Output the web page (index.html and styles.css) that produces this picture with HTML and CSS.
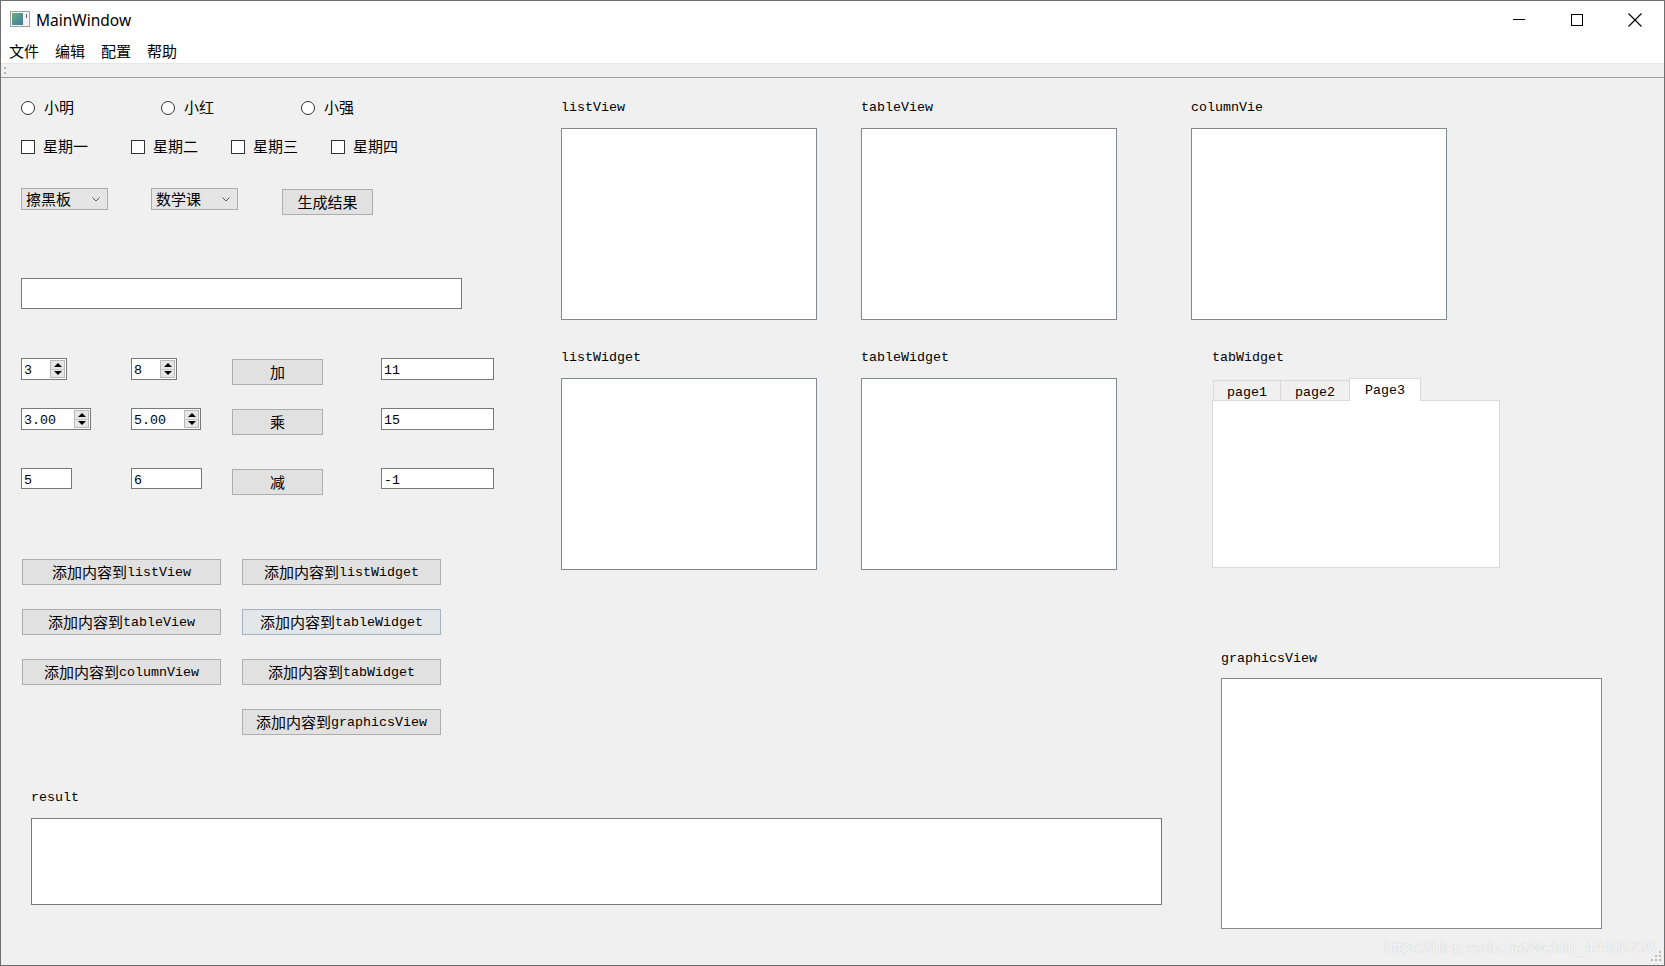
FILE: index.html
```html
<!DOCTYPE html>
<html>
<head>
<meta charset="utf-8">
<title>MainWindow</title>
<link rel="stylesheet" href="styles.css">
</head>
<body>
<div class="window">
  <div class="titlebar">
    <svg class="appicon" width="20" height="16" viewBox="0 0 20 16">
      <defs>
        <linearGradient id="ig" x1="0" y1="0" x2="1" y2="1">
          <stop offset="0" stop-color="#6bb07a"/>
          <stop offset="1" stop-color="#3c78a8"/>
        </linearGradient>
      </defs>
      <rect x="0.5" y="0.5" width="19" height="15" fill="#f4f4f4" stroke="#a0a0a0"/>
      <rect x="2" y="2" width="11" height="12" fill="url(#ig)"/>
      <rect x="16" y="3" width="1" height="4" fill="#5a5a5a"/>
    </svg>
    <span class="title">MainWindow</span>
    <div class="controls">
      <div class="ctl"><svg width="12" height="1" viewBox="0 0 12 1"><rect width="12" height="1" fill="#000"/></svg></div>
      <div class="ctl"><svg width="12" height="12" viewBox="0 0 12 12"><rect x="0.5" y="0.5" width="11" height="11" fill="none" stroke="#000"/></svg></div>
      <div class="ctl"><svg width="14" height="14" viewBox="0 0 14 14"><path d="M0.5 0.5 L13.5 13.5 M13.5 0.5 L0.5 13.5" stroke="#000" stroke-width="1.1" fill="none"/></svg></div>
    </div>
  </div>
  <div class="menubar"><span>文件</span><span>编辑</span><span>配置</span><span>帮助</span></div>
  <div class="toolbar">
    <svg class="handle" width="3" height="8" viewBox="0 0 3 8"><rect x="0" y="0" width="2" height="2" fill="#b4b4b4"/><rect x="0" y="5" width="2" height="2" fill="#b4b4b4"/></svg>
  </div>
  <div class="central">
    <div class="main">
      <div class="upper">
        <div class="form">
          <div class="row radios">
            <div class="opt gap9"><span class="radio"></span><span class="cj">小明</span></div>
            <div class="opt gap9"><span class="radio"></span><span class="cj">小红</span></div>
            <div class="opt gap9"><span class="radio"></span><span class="cj">小强</span></div>
          </div>
          <div class="row checks">
            <div class="opt gap8"><span class="check"></span><span class="cj">星期一</span></div>
            <div class="opt gap8"><span class="check"></span><span class="cj">星期二</span></div>
            <div class="opt gap8"><span class="check"></span><span class="cj">星期三</span></div>
            <div class="opt gap8"><span class="check"></span><span class="cj">星期四</span></div>
          </div>
          <div class="row combos">
            <div class="combo"><span>擦黑板</span><svg class="chev" width="8" height="5" viewBox="0 0 8 5"><path d="M0.5 0.5 L4 4 L7.5 0.5" fill="none" stroke="#5a5a5a"/></svg></div>
            <div class="combo"><span>数学课</span><svg class="chev" width="8" height="5" viewBox="0 0 8 5"><path d="M0.5 0.5 L4 4 L7.5 0.5" fill="none" stroke="#5a5a5a"/></svg></div>
            <div class="btn gen">生成结果</div>
          </div>
          <div class="bigedit"></div>
          <div class="row calc calc1">
            <div class="edit spin w46"><span class="lat">3</span><div class="arrows"><span class="up"></span><span class="down"></span></div></div>
            <div class="edit spin w46"><span class="lat">8</span><div class="arrows"><span class="up"></span><span class="down"></span></div></div>
            <div class="btn op">加</div>
            <div class="edit res"><span class="lat">11</span></div>
          </div>
          <div class="row calc calc2">
            <div class="edit spin w70"><span class="lat">3.00</span><div class="arrows"><span class="up"></span><span class="down"></span></div></div>
            <div class="edit spin w70"><span class="lat">5.00</span><div class="arrows"><span class="up"></span><span class="down"></span></div></div>
            <div class="btn op">乘</div>
            <div class="edit res"><span class="lat">15</span></div>
          </div>
          <div class="row calc calc3">
            <div class="edit h21 w51"><span class="lat">5</span></div>
            <div class="edit h21 w71"><span class="lat">6</span></div>
            <div class="btn op">减</div>
            <div class="edit h21 res"><span class="lat">-1</span></div>
          </div>
          <div class="addbtns">
            <div class="btn">添加内容到<span class="lat">listView</span></div>
            <div class="btn">添加内容到<span class="lat">listWidget</span></div>
            <div class="btn">添加内容到<span class="lat">tableView</span></div>
            <div class="btn default">添加内容到<span class="lat">tableWidget</span></div>
            <div class="btn">添加内容到<span class="lat">columnView</span></div>
            <div class="btn">添加内容到<span class="lat">tabWidget</span></div>
            <div class="btn last">添加内容到<span class="lat">graphicsView</span></div>
          </div>
        </div>
        <div class="views">
          <div class="view"><div class="lbl">listView</div><div class="box"></div></div>
          <div class="view"><div class="lbl">tableView</div><div class="box"></div></div>
          <div class="view"><div class="lbl">listWidget</div><div class="box"></div></div>
          <div class="view"><div class="lbl">tableWidget</div><div class="box"></div></div>
        </div>
      </div>
      <div class="result">
        <div class="lbl">result</div>
        <div class="box resbox"></div>
      </div>
    </div>
    <div class="side">
      <div class="view"><div class="lbl">columnVie</div><div class="box"></div></div>
      <div class="tabw">
        <div class="lbl">tabWidget</div>
        <div class="tabs">
          <div class="tab t1">page1</div>
          <div class="tab t2">page2</div>
          <div class="tab t3 sel">Page3</div>
        </div>
        <div class="pane"></div>
      </div>
      <div class="gview">
        <div class="lbl">graphicsView</div>
        <div class="box gbox"></div>
      </div>
    </div>
  </div>
  <div class="watermark">https://blog.csdn.net/weixin_44405720</div>
  <svg class="grip" width="11" height="11" viewBox="0 0 11 11">
    <rect x="8" y="0" width="2" height="2" fill="#bdbdbd"/>
    <rect x="4" y="4" width="2" height="2" fill="#bdbdbd"/>
    <rect x="8" y="4" width="2" height="2" fill="#bdbdbd"/>
    <rect x="0" y="8" width="2" height="2" fill="#bdbdbd"/>
    <rect x="4" y="8" width="2" height="2" fill="#bdbdbd"/>
    <rect x="8" y="8" width="2" height="2" fill="#bdbdbd"/>
  </svg>
</div>
</body>
</html>
```

FILE: styles.css
```css
* { box-sizing: border-box; }
html, body { margin: 0; padding: 0; background: #ffffff; }
body {
  font-family: "Noto Sans CJK SC", "Noto Sans", sans-serif;
  font-size: 15px;
  color: #000;
}
.window {
  width: 1665px;
  height: 966px;
  border: 1px solid #6f6f6f;
  background: #f0f0f0;
  display: flex;
  flex-direction: column;
  position: relative;
  overflow: hidden;
}
.titlebar {
  height: 37px;
  flex: none;
  background: #fff;
  display: flex;
  align-items: center;
}
.appicon { margin-left: 9px; margin-top: -1px; }
.title {
  margin-left: 6px;
  font-family: "Noto Sans", "Open Sans", sans-serif;
  font-size: 15.5px;
  line-height: 20px;
}
.controls { margin-left: auto; display: flex; height: 100%; }
.ctl { width: 58px; display: flex; align-items: center; justify-content: center; }

.menubar { height: 25px; flex: none; background: #fff; display: flex; }
.menubar span { padding: 0 8px; line-height: 25px; font-size: 15px; }

.toolbar {
  height: 15px;
  flex: none;
  background: #f0f0f0;
  border-top: 1px solid #e6e6e6;
  border-bottom: 1px solid #a0a0a0;
  display: flex;
  align-items: center;
}
.handle { margin-left: 3px; }

.central { flex: 1; display: flex; }
.main { width: 1190px; flex: none; display: flex; flex-direction: column; }
.upper { display: flex; }

.form {
  width: 540px;
  flex: none;
  padding: 22px 0 0 20px;
  display: flex;
  flex-direction: column;
}
.lat { font-family: "Liberation Mono", monospace; font-size: 13.33px; }
.btn .lat { position: relative; top: 1px; }
.edit .lat { position: relative; top: 2px; }
.cj { position: relative; top: -1px; }
.row { display: grid; }
.opt { display: flex; align-items: center; line-height: 16px; height: 16px; }
.gap9 { gap: 9px; }
.gap8 { gap: 8px; }
.radios { grid-template-columns: 140px 140px auto; height: 16px; }
.radio {
  width: 14px; height: 14px;
  border: 1px solid #333;
  border-radius: 50%;
  background: #fff;
  flex: none;
}
.checks { margin-top: 23px; grid-template-columns: 110px 100px 100px auto; height: 16px; }
.check {
  width: 14px; height: 14px;
  border: 1px solid #333;
  background: #fff;
  flex: none;
}
.combos { margin-top: 33px; grid-template-columns: 130px 131px auto; align-items: start; }
.combo {
  width: 87px; height: 22px;
  border: 1px solid #acacac;
  background: #e5e5e5;
  display: flex;
  align-items: center;
  padding-left: 4px;
  line-height: 20px;
}
.chev { margin-left: auto; margin-right: 7px; }

.btn {
  height: 26px;
  border: 1px solid #adadad;
  background: #e1e1e1;
  display: flex;
  align-items: center;
  justify-content: center;
  line-height: 20px;
  white-space: nowrap;
}
.btn.default { border-color: #a3b3c4; background: #e4e7ea; }
.gen { width: 91px; margin-top: 1px; }

.bigedit {
  margin-top: 63px;
  width: 441px; height: 31px;
  border: 1px solid #7a7a7a;
  background: #fff;
}

.calc { grid-template-columns: 110px 101px 149px auto; align-items: start; }
.calc1 { margin-top: 49px; }
.calc2 { margin-top: 23px; }
.calc3 { margin-top: 33px; }
.edit {
  height: 22px;
  border: 1px solid #7a7a7a;
  background: #fff;
  padding-left: 2px;
  display: flex;
  align-items: center;
  line-height: 16px;
}
.edit.h21 { height: 21px; }
.w46 { width: 46px; }
.w70 { width: 70px; }
.w51 { width: 51px; }
.w71 { width: 71px; }
.res { width: 113px; }
.op { width: 91px; margin-top: 1px; }

.arrows {
  margin-left: auto;
  margin-right: 1px;
  width: 15px;
  height: 18px;
  display: flex;
  flex-direction: column;
  border: 1px solid #b9b9b9;
  background: #e6e6e6;
}
.arrows span {
  flex: 1;
  display: flex;
  align-items: center;
  justify-content: center;
}
.arrows .up { border-bottom: 1px solid #c8c8c8; }
.arrows .up::after {
  content: "";
  border-left: 4px solid transparent;
  border-right: 4px solid transparent;
  border-bottom: 4px solid #000;
}
.arrows .down::after {
  content: "";
  border-left: 4px solid transparent;
  border-right: 4px solid transparent;
  border-top: 4px solid #000;
}

.addbtns {
  margin-top: 64px;
  margin-left: 1px;
  display: grid;
  grid-template-columns: 199px 199px;
  column-gap: 21px;
  row-gap: 24px;
}
.addbtns .last { grid-column: 2; }

.views {
  padding: 21px 0 0 20px;
  display: grid;
  grid-template-columns: 300px 256px;
  row-gap: 29px;
  align-content: start;
}
.lbl {
  height: 16px;
  line-height: 17px;
  font-family: "Liberation Mono", monospace;
  font-size: 13.33px;
}
.box {
  margin-top: 13px;
  width: 256px;
  height: 192px;
  border: 1px solid #828790;
  background: #fff;
}

.result { margin: 54px 0 0 30px; }
.resbox { width: 1131px; height: 87px; border-color: #7a7a7a; }

.side { padding-top: 21px; display: flex; flex-direction: column; }
.tabw { margin: 29px 0 0 21px; }
.tabs {
  margin-top: 13px;
  height: 22px;
  display: flex;
  align-items: flex-end;
  padding-left: 1px;
  position: relative;
  z-index: 1;
}
.tab {
  height: 20px;
  border: 1px solid #d9d9d9;
  border-bottom: none;
  background: #f0f0f0;
  font-family: "Liberation Mono", monospace;
  font-size: 13.33px;
  display: flex;
  align-items: center;
  justify-content: center;
  padding-top: 3px;
}
.t1 { width: 68px; }
.t2 { width: 70px; margin-left: -1px; }
.t3 { width: 72px; margin-left: -1px; }
.tab.sel {
  height: 23px;
  margin-bottom: -1px;
  background: #fff;
  padding-top: 1px;
}
.pane {
  width: 288px;
  height: 168px;
  border: 1px solid #d9d9d9;
  background: #fff;
}
.gview { margin: 82px 0 0 30px; }
.gbox { margin-top: 12px; width: 381px; height: 251px; }

.watermark {
  position: absolute;
  left: 1383px;
  top: 937px;
  font-family: "Liberation Sans", sans-serif;
  font-size: 16px;
  line-height: 20px;
  color: rgba(255, 255, 255, 0.9);
  text-shadow: 0 0 1px rgba(0, 0, 0, 0.25);
  white-space: nowrap;
}
.grip { position: absolute; right: 2px; bottom: 3px; }
```
